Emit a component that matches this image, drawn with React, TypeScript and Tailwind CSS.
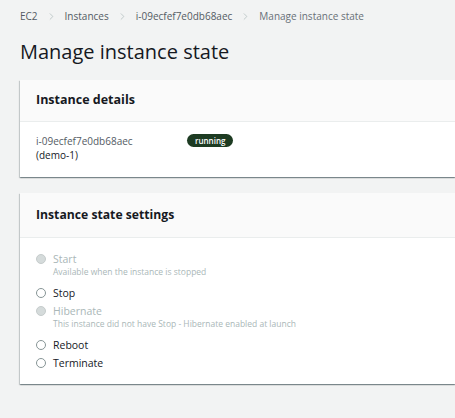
import { ChevronRight } from "lucide-react";

interface StateOption {
  label: string;
  hint?: string;
  disabled?: boolean;
}

const options: StateOption[] = [
  { label: "Start", hint: "Available when the instance is stopped", disabled: true },
  { label: "Stop" },
  {
    label: "Hibernate",
    hint: "This instance did not have Stop - Hibernate enabled at launch",
    disabled: true,
  },
  { label: "Reboot" },
  { label: "Terminate" },
];

const crumbs = ["EC2", "Instances", "i-09ecfef7e0db68aec", "Manage instance state"];

function Radio({ disabled }: { disabled?: boolean }) {
  return disabled ? (
    <span className="w-[10px] h-[10px] rounded-full bg-[#d5dbdb] border border-[#c6cccc] shrink-0" />
  ) : (
    <span className="w-[10px] h-[10px] rounded-full bg-white border border-[#879596] shrink-0" />
  );
}

export default function App() {
  return (
    <div
      className="w-[455px] h-[418px] overflow-hidden bg-[#f2f3f3] pl-[20px] pt-[9px]"
      style={{ fontFamily: '"Open Sans", "Liberation Sans", Arial, sans-serif' }}
    >
      {/* breadcrumb */}
      <nav className="flex items-center gap-[8px] text-[10px] text-[#545b64] h-[15px]">
        {crumbs.map((c, i) => (
          <span key={c} className="flex items-center gap-[8px]">
            {i > 0 && <ChevronRight className="w-[11px] h-[11px] text-[#aab7b8]" strokeWidth={1.5} />}
            <span className={i === crumbs.length - 1 ? "text-[#687078]" : ""}>{c}</span>
          </span>
        ))}
      </nav>

      <h1 className="mt-[14px] text-[20px] leading-[28px] text-[#16191f]">
        Manage instance state
      </h1>

      {/* Instance details */}
      <section className="mt-[14px] bg-white shadow-[0_1px_1px_0_rgba(0,28,36,0.3),1px_1px_1px_0_rgba(0,28,36,0.15),-1px_1px_1px_0_rgba(0,28,36,0.15)]">
        <div className="h-[42px] bg-[#fafafa] border-b border-[#eaeded] px-[16px] flex items-center">
          <h2 className="text-[12.5px] font-bold text-[#16191f]">Instance details</h2>
        </div>
        <div className="px-[16px] pt-[12px] pb-[15px] flex">
          <div className="w-[151px] text-[10px] leading-[14px]">
            <div className="text-[#545b64]">i-09ecfef7e0db68aec</div>
            <div className="text-[#16191f]">(demo-1)</div>
          </div>
          <span className="h-[13px] px-[8px] rounded-full bg-[#1d3b22] text-white text-[8px] font-semibold leading-[13px]">
            running
          </span>
        </div>
      </section>

      {/* Instance state settings */}
      <section className="mt-[16px] bg-white shadow-[0_1px_1px_0_rgba(0,28,36,0.3),1px_1px_1px_0_rgba(0,28,36,0.15),-1px_1px_1px_0_rgba(0,28,36,0.15)]">
        <div className="h-[45px] bg-[#fafafa] border-b border-[#eaeded] px-[16px] flex items-center">
          <h2 className="text-[12.2px] font-bold text-[#16191f]">Instance state settings</h2>
        </div>
        <div className="px-[16px] pt-[14px] pb-[14px] flex flex-col gap-[4px]">
          {options.map((o) => (
            <div key={o.label} className="flex items-start gap-[7px]">
              <div className="h-[14px] flex items-center">
                <Radio disabled={o.disabled} />
              </div>
              <div className="leading-[14px]">
                <div
                  className={`text-[10.5px] ${o.disabled ? "text-[#aab7b8]" : "text-[#16191f]"}`}
                >
                  {o.label}
                </div>
                {o.hint && (
                  <div className="text-[8.5px] leading-[12px] mb-[4px] text-[#aab7b8]">{o.hint}</div>
                )}
              </div>
            </div>
          ))}
        </div>
      </section>
    </div>
  );
}
